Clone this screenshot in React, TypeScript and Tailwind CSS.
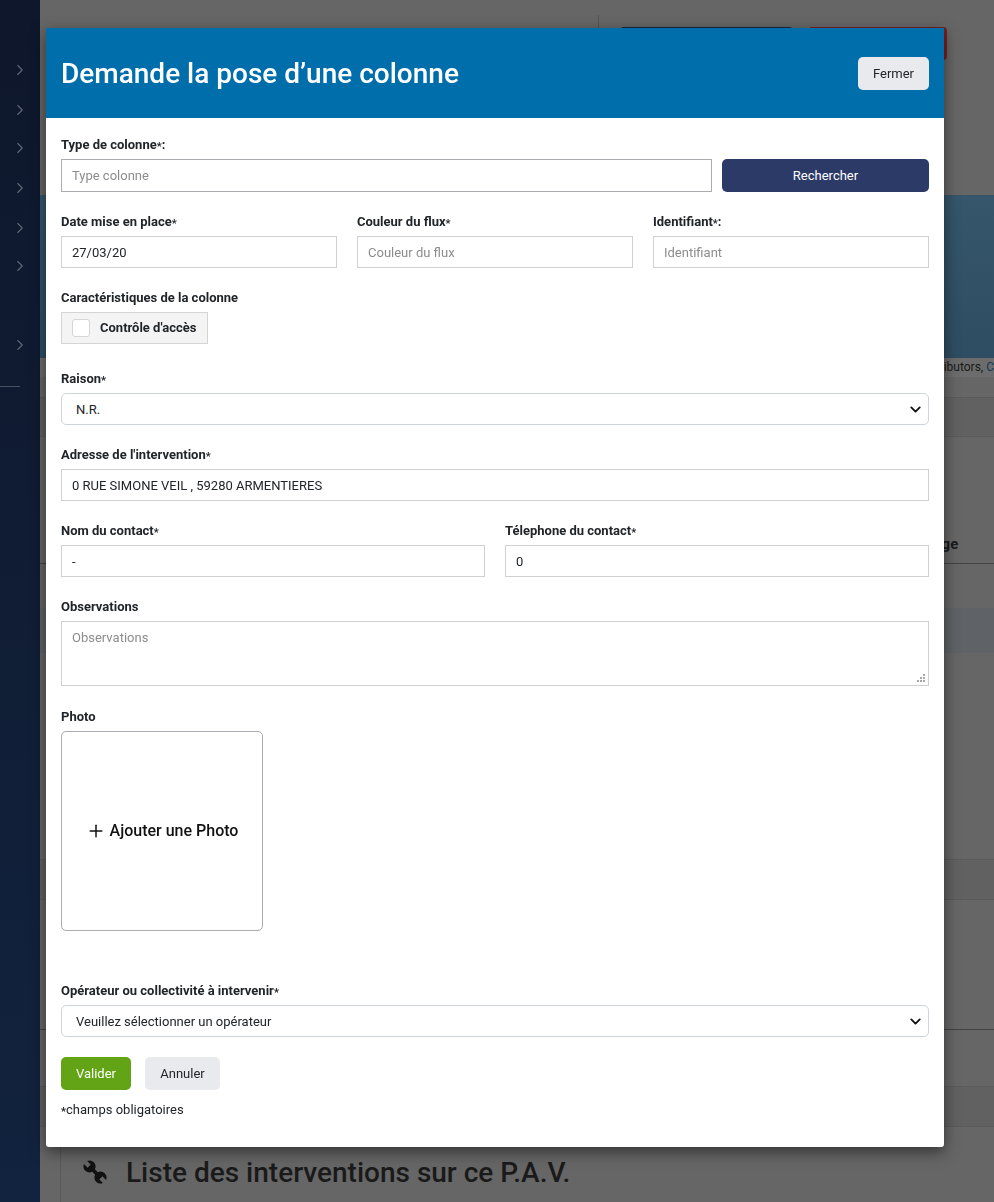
import { ChevronDown, ChevronRight, Plus } from 'lucide-react'
import type { ReactNode } from 'react'

const SIDEBAR_GAPS = ['mt-[61px]', 'mt-[22px]', 'mt-[20px]', 'mt-[22px]', 'mt-[22px]', 'mt-[20px]', 'mt-[61px]']

function Star() {
  return <span className="text-[11px] font-bold align-[-1px]">*</span>
}

function Label({ children, star, colon }: { children: ReactNode; star?: boolean; colon?: boolean }) {
  return (
    <label className="block h-[15px] mb-[7px] text-[13px] leading-[15px] font-bold text-[#212529]">
      {children}
      {star && <Star />}
      {colon && ':'}
    </label>
  )
}

function Field({ placeholder, value, className = 'h-[32px] border-[#ced0d2]' }: { placeholder?: string; value?: string; className?: string }) {
  return (
    <input
      readOnly
      placeholder={placeholder}
      value={value ?? ''}
      className={`block w-full border bg-white px-[10px] text-[13px] text-[#212529] placeholder:text-[#8c8c8c] outline-none ${className}`}
    />
  )
}

function Select({ value }: { value: string }) {
  return (
    <div className="relative h-[32px]">
      <select className="block h-full w-full appearance-none rounded-[5px] border border-[#ced4da] bg-white pl-[14px] pr-8 pt-[2px] text-[13px] text-[#212529] outline-none">
        <option>{value}</option>
      </select>
      <ChevronDown size={17} strokeWidth={2.6} className="pointer-events-none absolute right-[5px] top-[8px] text-[#111]" />
    </div>
  )
}

function BackgroundPage() {
  return (
    <div className="flex h-[1202px] overflow-hidden bg-[#666666]">
      <aside className="w-[40px] shrink-0 bg-gradient-to-b from-[#0e172b] to-[#12233f]">
        <div className="flex w-[40px] flex-col">
          {SIDEBAR_GAPS.map((gap, i) => (
            <ChevronRight key={i} size={18} strokeWidth={1.5} className={`${gap} ml-[11px] text-[#5f6775]`} />
          ))}
          <div className="mt-[32px] h-px w-[20px] bg-[#4a515e]" />
        </div>
      </aside>
      <main className="min-w-0 flex-1">
        <div className="flex h-[195px] items-start pt-[15px]">
          <div className="ml-[558px] h-[20px] w-px bg-[#555555]" />
          <div className="ml-[21px] mt-[12px] h-[33px] w-[173px] rounded bg-[#1c2541]" />
          <div className="ml-[15px] mt-[12px] h-[33px] w-[139px] rounded bg-[#7a2020]" />
        </div>
        <div className="h-[163px] bg-gradient-to-b from-[#35566b] to-[#2f4d62]" />
        <div className="flex h-[19px] justify-end whitespace-nowrap bg-[#6c6c6c] text-[12px] leading-[19px] text-[#1a1a1a]">
          <span>contributors, <span className="text-[#123a55]">C</span></span>
        </div>
        <div className="mt-[20px] h-[40px] border-y border-[#5a5a5a] bg-[#616161]" />
        <div className="h-[127px] border-b border-[#444444] pt-[97px] pl-[878px] text-[15px] leading-[20px] font-bold text-[#1a1a1a]">
          <span className="ml-[-2px]">Usage</span>
        </div>
        <div className="h-[44px]" />
        <div className="h-[45px] bg-[#5f6367]" />
        <div className="h-[207px] border-b border-[#5a5a5a]" />
        <div className="h-[40px] border-b border-[#5a5a5a] bg-[#616161]" />
        <div className="h-[130px] border-b border-[#444444]" />
        <div className="h-[57px] border-b border-[#5a5a5a]" />
        <div className="h-[40px] border-b border-[#5a5a5a] bg-[#616161]" />
        <div className="ml-[20px] flex h-[75px] items-start gap-[19px] border-l border-[#5a5a5a] pl-[22px] pt-[28px]">
          <svg width="24" height="24" viewBox="0 0 24 24" className="mt-[5px] text-[#111]" fill="currentColor">
            <path d="M4.110 1 7.710 4.590 4.590 7.710 1 4.110A6 6 0 0 0 9.190 11.870L12.130 14.810A6 6 0 0 0 19.890 23L16.290 19.410 19.410 16.290 23 19.890A6 6 0 0 0 14.810 12.130L11.870 9.190A6 6 0 0 0 4.110 1Z" />
          </svg>
          <h2 className="whitespace-nowrap text-[28px] leading-[36px] font-medium text-[#1a1a1a]">
            Liste des interventions sur ce P.A.V.
          </h2>
        </div>
      </main>
    </div>
  )
}

export default function App() {
  return (
    <div className="relative h-[1202px] overflow-hidden font-['Roboto',sans-serif]">
      <BackgroundPage />

      {/* Modal */}
      <div className="fixed left-[46px] top-[28px] w-[898px] h-[1119px] rounded-b-[3px] bg-white shadow-[0_5px_15px_rgba(0,0,0,0.5)]">
        <header className="flex h-[90px] items-center justify-between bg-[#006eab] px-[15px]">
          <h1 className="pt-[2px] text-[28px] leading-[34px] font-medium text-white">Demande la pose d’une colonne</h1>
          <button type="button" className="h-[33px] w-[71px] rounded-[5px] bg-[#e9eaee] pt-[1px] text-[13px] text-[#212529]">Fermer</button>
        </header>

        <form className="px-[15px] pt-[19px]">
          <Label star colon>Type de colonne</Label>
          <div className="mb-[22px] flex gap-[10px]">
            <div className="flex-1">
              <Field placeholder="Type colonne" className="h-[33px] border-[#a9adb0]" />
            </div>
            <button type="button" className="h-[33px] w-[207px] rounded-[5px] bg-[#2c3a68] text-[13px] text-white">Rechercher</button>
          </div>

          <div className="mb-[22px] grid grid-cols-3 gap-[20px]">
            <div>
              <Label star>Date mise en place</Label>
              <Field value="27/03/20" />
            </div>
            <div>
              <Label star>Couleur du flux</Label>
              <Field placeholder="Couleur du flux" />
            </div>
            <div>
              <Label star colon>Identifiant</Label>
              <Field placeholder="Identifiant" />
            </div>
          </div>

          <div className="mb-[27px]">
            <Label>Caractéristiques de la colonne</Label>
            <div className="flex h-[32px] w-[147px] items-center border border-[#d4d4d4] bg-[#f4f4f5] pl-[10px]">
              <span className="h-[18px] w-[18px] rounded-[3px] border border-[#d6d6d6] bg-white" />
              <span className="ml-[10px] text-[13px] font-bold text-[#212529]">Contrôle d'accès</span>
            </div>
          </div>

          <div className="mb-[22px]">
            <Label star>Raison</Label>
            <Select value="N.R." />
          </div>

          <div className="mb-[22px]">
            <Label star>Adresse de l'intervention</Label>
            <Field value="0 RUE SIMONE VEIL , 59280 ARMENTIERES" />
          </div>

          <div className="mb-[22px] grid grid-cols-2 gap-[20px]">
            <div>
              <Label star>Nom du contact</Label>
              <Field value="-" />
            </div>
            <div>
              <Label star>Télephone du contact</Label>
              <Field value="0" />
            </div>
          </div>

          <div className="mb-[23px]">
            <Label>Observations</Label>
            <div className="relative">
              <textarea
                readOnly
                placeholder="Observations"
                className="block h-[65px] w-full resize-none border border-[#ced0d2] bg-white px-[10px] py-[6px] text-[13px] text-[#212529] placeholder:text-[#8c8c8c] outline-none"
              />
              {/* resize grip */}
              <svg width="9" height="9" viewBox="0 0 9 9" className="absolute bottom-[3px] right-[3px] text-[#a8a8a8]" fill="currentColor">
                <rect x="6" y="0" width="2" height="2" />
                <rect x="3" y="3" width="2" height="2" />
                <rect x="6" y="3" width="2" height="2" />
                <rect x="0" y="6" width="2" height="2" />
                <rect x="3" y="6" width="2" height="2" />
                <rect x="6" y="6" width="2" height="2" />
              </svg>
            </div>
          </div>

          <div className="mb-[52px]">
            <Label>Photo</Label>
            <div className="flex h-[200px] w-[202px] items-center justify-center rounded-[5px] border border-[#a9acb0] bg-white text-[16px] font-medium text-[#111]">
              <Plus size={20} strokeWidth={1.8} className="mr-[4px]" />
              Ajouter une Photo
            </div>
          </div>

          <div className="mb-[20px]">
            <Label star>Opérateur ou collectivité à intervenir</Label>
            <Select value="Veuillez sélectionner un opérateur" />
          </div>

          <div className="flex gap-[14px]">
            <button type="button" className="h-[33px] w-[70px] rounded-[5px] bg-[#62a415] text-[13px] text-white">Valider</button>
            <button type="button" className="h-[33px] w-[75px] rounded-[5px] bg-[#e9eaee] text-[13px] text-[#212529]">Annuler</button>
          </div>
          <p className="mt-[12px] text-[13px] leading-[15px] text-[#212529]">
            <Star />champs obligatoires
          </p>
        </form>
      </div>
    </div>
  )
}
